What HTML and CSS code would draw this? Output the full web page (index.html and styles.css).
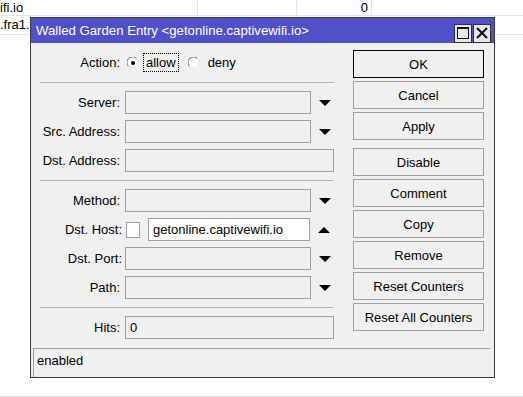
FILE: index.html
```html
<!DOCTYPE html>
<html>
<head>
    <title>Walled Garden Entry</title>
    <link rel="stylesheet" href="styles.css">
</head>
<body>
    <div class="list">
        <div class="list-row first">
            <div class="cell c1">ifi.io</div>
            <div class="cell c2"></div>
            <div class="cell c3 num">0</div>
        </div>
        <div class="list-row">
            <div class="cell c1 plain">.fra1.</div>
        </div>
    </div>

    <div class="window">
        <div class="titlebar">
            <span class="title">Walled Garden Entry &lt;getonline.captivewifi.io&gt;</span>
            <div class="title-buttons">
                <div class="tbtn"><span class="max-icon"></span></div>
                <div class="tbtn">
                    <svg width="12" height="12" viewBox="0 0 12 12"><path d="M1 1 L11 11 M11 1 L1 11" stroke="#111" stroke-width="2"/></svg>
                </div>
            </div>
        </div>

        <div class="main">
            <div class="form">
                <div class="row">
                    <label>Action:</label>
                    <svg class="radio" width="12" height="12" viewBox="0 0 12 12">
                        <circle cx="6" cy="6" r="5.5" fill="#fff"/>
                        <path d="M1.5 9.5 A5 5 0 0 1 9.5 1.5" stroke="#606060" fill="none"/>
                        <path d="M9.5 1.5 A5 5 0 0 1 1.5 9.5" stroke="#e0e0e0" fill="none"/>
                        <circle cx="6" cy="6" r="2" fill="#000"/>
                    </svg>
                    <span class="focus">allow</span>
                    <svg class="radio second" width="12" height="12" viewBox="0 0 12 12">
                        <circle cx="6" cy="6" r="5.5" fill="#fff"/>
                        <path d="M1.5 9.5 A5 5 0 0 1 9.5 1.5" stroke="#606060" fill="none"/>
                        <path d="M9.5 1.5 A5 5 0 0 1 1.5 9.5" stroke="#e0e0e0" fill="none"/>
                    </svg>
                    <span class="deny">deny</span>
                </div>

                <div class="sep"></div>

                <div class="row">
                    <label>Server:</label>
                    <div class="field"></div>
                    <div class="arrow"><svg width="12" height="6" viewBox="0 0 12 6"><polygon points="0,0 12,0 6,6" fill="#000"/></svg></div>
                </div>
                <div class="row">
                    <label>Src. Address:</label>
                    <div class="field"></div>
                    <div class="arrow"><svg width="12" height="6" viewBox="0 0 12 6"><polygon points="0,0 12,0 6,6" fill="#000"/></svg></div>
                </div>
                <div class="row">
                    <label>Dst. Address:</label>
                    <div class="field wide"></div>
                </div>

                <div class="sep"></div>

                <div class="row">
                    <label>Method:</label>
                    <div class="field"></div>
                    <div class="arrow"><svg width="12" height="6" viewBox="0 0 12 6"><polygon points="0,0 12,0 6,6" fill="#000"/></svg></div>
                </div>
                <div class="row">
                    <label class="tight">Dst. Host:</label>
                    <span class="check"></span>
                    <div class="field host">getonline.captivewifi.io</div>
                    <div class="arrow"><svg width="12" height="6" viewBox="0 0 12 6"><polygon points="0,6 12,6 6,0" fill="#000"/></svg></div>
                </div>
                <div class="row">
                    <label class="tight">Dst. Port:</label>
                    <div class="field"></div>
                    <div class="arrow"><svg width="12" height="6" viewBox="0 0 12 6"><polygon points="0,0 12,0 6,6" fill="#000"/></svg></div>
                </div>
                <div class="row">
                    <label>Path:</label>
                    <div class="field"></div>
                    <div class="arrow"><svg width="12" height="6" viewBox="0 0 12 6"><polygon points="0,0 12,0 6,6" fill="#000"/></svg></div>
                </div>

                <div class="sep"></div>

                <div class="row">
                    <label>Hits:</label>
                    <div class="field wide">0</div>
                </div>
            </div>

            <div class="buttons">
                <div class="btn default">OK</div>
                <div class="btn">Cancel</div>
                <div class="btn">Apply</div>
                <div class="btn spaced">Disable</div>
                <div class="btn">Comment</div>
                <div class="btn">Copy</div>
                <div class="btn">Remove</div>
                <div class="btn">Reset Counters</div>
                <div class="btn">Reset All Counters</div>
            </div>
        </div>

        <div class="status">enabled</div>
    </div>
</body>
</html>
```

FILE: styles.css
```css
body {
    margin: 0;
    font-family: "Liberation Sans", Arial, sans-serif;
    font-size: 13px;
    color: #000;
    background-color: #fff;
}

/* list behind the window */
.list {
    box-sizing: border-box;
    height: 397px;
    border-bottom: 1px solid #d8d8d8;
}

.list-row {
    display: flex;
    height: 18px;
    border-bottom: 1px solid #e4e4e4;
}

.list-row.first {
    height: 15px;
}

.cell {
    box-sizing: border-box;
    height: 100%;
    line-height: 15px;
    border-right: 1px solid #e4e4e4;
}

.cell.plain {
    border-right: none;
    line-height: 17px;
}

.c1 {
    width: 198px;
}

.c2 {
    width: 99px;
}

.c3 {
    width: 75px;
}

.num {
    text-align: right;
    padding-right: 3px;
}

/* window */
.window {
    position: absolute;
    left: 30px;
    top: 17px;
    width: 465px;
    height: 361px;
    box-sizing: border-box;
    border: 1px solid #3a3a3a;
    background-color: #f0f0f0;
    display: flex;
    flex-direction: column;
}

.titlebar {
    height: 25px;
    background-color: #5050c8;
    display: flex;
    align-items: center;
    justify-content: space-between;
    padding-left: 5px;
    padding-right: 3px;
}

.title {
    color: #fff;
    font-size: 13.2px;
}

.title-buttons {
    display: flex;
    gap: 1px;
    margin-top: 5px;
}

.tbtn {
    box-sizing: border-box;
    width: 18px;
    height: 19px;
    border: 1px solid #303030;
    background-color: #e6e6e6;
    display: flex;
    align-items: center;
    justify-content: center;
}

.max-icon {
    box-sizing: border-box;
    width: 12px;
    height: 12px;
    border: 1px solid #111;
    border-top-width: 2px;
}

.main {
    display: flex;
    height: 305px;
}

.form {
    width: 312px;
    box-sizing: border-box;
    padding: 8px 0 0 9px;
}

.row {
    display: flex;
    align-items: center;
    height: 23px;
    margin-bottom: 6px;
}

.row label {
    width: 80px;
    text-align: right;
    margin-right: 5px;
    flex-shrink: 0;
}

.row label.tight {
    width: 82px;
    margin-right: 3px;
}

.radio {
    margin-left: 2px;
}

.radio.second {
    margin-left: 9px;
}

.focus {
    margin-left: 4px;
    padding: 1px 2px;
    border: 1px dotted #000;
}

.deny {
    margin-left: 8px;
}

.sep {
    height: 1px;
    width: 294px;
    background-color: #b4b4b4;
    margin: 8px 0;
}

.field {
    box-sizing: border-box;
    width: 186px;
    height: 23px;
    border: 1px solid #a0a0a0;
    background-color: #f0f0f0;
    padding-left: 4px;
    line-height: 21px;
}

.field.wide {
    width: 209px;
}

.field.host {
    width: 162px;
    background-color: #fff;
}

.check {
    box-sizing: border-box;
    width: 14px;
    height: 16px;
    border: 1px solid #a0a0a0;
    background-color: #fff;
    margin-left: 1px;
    margin-right: 8px;
}

.arrow {
    width: 23px;
    display: flex;
    justify-content: center;
    padding-left: 2px;
}

.buttons {
    display: flex;
    flex-direction: column;
    gap: 3px;
    padding-top: 7px;
    margin-left: 10px;
}

.btn {
    box-sizing: border-box;
    width: 131px;
    height: 28px;
    border: 1px solid #a0a0a0;
    background-color: #f0f0f0;
    display: flex;
    align-items: center;
    justify-content: center;
}

.btn.default {
    border-color: #000;
}

.btn.spaced {
    margin-top: 5px;
}

.status {
    flex: 1;
    margin: 0 4px 0 2px;
    border-top: 1px solid #a0a0a0;
    border-left: 1px solid #a0a0a0;
    padding-left: 3px;
    line-height: 24px;
}
```
